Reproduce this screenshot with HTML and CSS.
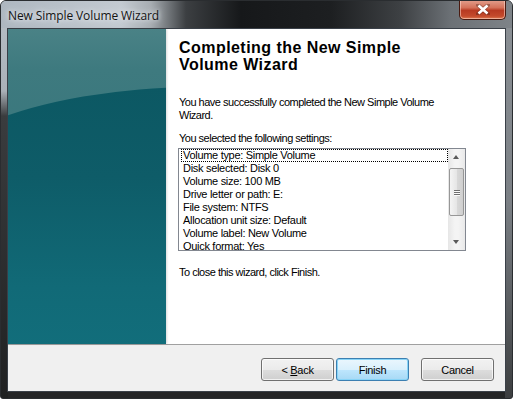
FILE: index.html
```
<!DOCTYPE html>
<html lang="en">
<head>
    <meta charset="UTF-8">
    <title>New Simple Volume Wizard</title>
    <link rel="stylesheet" href="styles.css">
</head>
<body>

<div class="window">
    <!-- Titelleiste -->
    <div class="titlebar">
        <span class="title">New Simple Volume Wizard</span>
        <button class="close" title="Close">
            <svg width="14" height="11" viewBox="0 0 14 11">
                <path d="M2 1 L12 10 M12 1 L2 10" stroke="#3a1a12" stroke-width="4" stroke-linecap="square" opacity="0.35"/>
                <path d="M2.5 1.5 L11.5 9.5 M11.5 1.5 L2.5 9.5" stroke="#fff" stroke-width="2.6"/>
            </svg>
        </button>
    </div>

    <div class="client">
        <div class="main">
            <div class="side"></div>
            <div class="content">
                <h1>Completing the New Simple Volume Wizard</h1>
                <p class="intro">You have successfully completed the New Simple Volume<br>Wizard.</p>
                <p class="label">You selected the following settings:</p>

                <div class="listbox">
                    <div class="items">
                        <div class="item focused">Volume type: Simple Volume</div>
                        <div class="item">Disk selected: Disk 0</div>
                        <div class="item">Volume size: 100 MB</div>
                        <div class="item">Drive letter or path: E:</div>
                        <div class="item">File system: NTFS</div>
                        <div class="item">Allocation unit size: Default</div>
                        <div class="item">Volume label: New Volume</div>
                        <div class="item">Quick format: Yes</div>
                    </div>
                    <div class="scrollbar">
                        <div class="arrow up"></div>
                        <div class="track">
                            <div class="thumb"><span></span><span></span><span></span></div>
                        </div>
                        <div class="arrow down"></div>
                    </div>
                </div>

                <p class="outro">To close this wizard, click Finish.</p>
            </div>
        </div>

        <!-- Schaltflächen -->
        <div class="footer">
            <button class="btn">&lt; <u>B</u>ack</button>
            <button class="btn default">Finish</button>
            <button class="btn cancel">Cancel</button>
        </div>
    </div>
</div>

</body>
</html>
```

FILE: styles.css
```
body {
    margin: 0;
    background: #ffffff;
    font-family: "Liberation Sans", Arial, sans-serif;
}
.window {
    width: 513px;
    height: 399px;
    box-sizing: border-box;
    border: 1px solid #2a2d30;
    border-radius: 6px 6px 3px 3px;
    overflow: hidden;
    background:
        linear-gradient(to bottom, #b9c0c7 0, #aab1b8 90px, #3a3c3e 115px, #202122 100%) left top / 7px 100% no-repeat,
        linear-gradient(to bottom, #8c9196 0, #7b8085 200px, #3c3e40 100%) right top / 7px 100% no-repeat,
        #242526;
    display: flex;
    flex-direction: column;
}
.titlebar {
    height: 27px;
    display: flex;
    align-items: flex-start;
    justify-content: space-between;
    background:
        linear-gradient(to right, #aeb7c0 0, #c3cad1 120px, #a7adb2 150px, #3c3f42 185px, #16181a 240px, #1d1f21 330px, #3e4144 400px, #6c7176 450px, #7e8388 100%);
}
.title {
    margin: 6px 0 0 7px;
    font-family: "Open Sans", "Noto Sans", sans-serif;
    font-size: 12px;
    letter-spacing: -0.1px;
    color: #141414;
    text-shadow: 0 0 8px #e8ecf0, 0 0 4px #e8ecf0;
}
.close {
    width: 47px;
    height: 20px;
    margin: -1px 6px 0 0;
    padding: 0;
    border: 1px solid #4a1a10;
    border-top: none;
    border-radius: 0 0 5px 5px;
    background: linear-gradient(to bottom, #e3a08e 0, #d4725a 40%, #b83a22 55%, #c44a2c 85%, #de7b52 100%);
    box-shadow: inset 0 0 0 1px rgba(255, 220, 210, 0.55);
    display: flex;
    align-items: center;
    justify-content: center;
}
.client {
    margin: 0 6px 6px 6px;
    flex: 1;
    border: 1px solid #3a4048;
    background: #f0f0f0;
    display: flex;
    flex-direction: column;
}
.main {
    height: 315px;
    display: flex;
    background: #ffffff;
    border-bottom: 1px solid #a0a0a0;
}
.side {
    width: 158px;
    position: relative;
    overflow: hidden;
    background: linear-gradient(to bottom, #4a8286 0, #3e7a7f 40px, #2f7078 100%);
    box-shadow: 1px 0 2px rgba(0, 0, 0, 0.15);
}
/* dunkler Bogen im Seitenbild */
.side::after {
    content: "";
    position: absolute;
    left: -110px;
    top: 58px;
    width: 600px;
    height: 400px;
    border-radius: 300px 300px 0 0 / 125px 125px 0 0;
    background: linear-gradient(to bottom, #0c5863 0, #0e5c68 90px, #116a77 200px, #137684 100%);
}
.content {
    flex: 1;
    padding: 10px 12px 0 13px;
    font-size: 11px;
    color: #000;
}
h1 {
    margin: 0;
    font-size: 16px;
    line-height: 17px;
    font-weight: bold;
    letter-spacing: 0.45px;
    width: 270px;
}
p {
    margin: 0;
    line-height: 13px;
    letter-spacing: -0.5px;
}
.intro {
    margin-top: 23px;
    white-space: nowrap;
}
.label {
    margin-top: 10px;
}
.listbox {
    margin: 3px 0 0 -1px;
    width: 288px;
    height: 103px;
    box-sizing: border-box;
    border: 1px solid #828790;
    display: flex;
    background: #fff;
}
.items {
    flex: 1;
    overflow: hidden;
    padding: 0 0 0 2px;
}
.item {
    height: 13px;
    line-height: 13px;
    padding-left: 2px;
    letter-spacing: -0.3px;
    white-space: nowrap;
}
.item.focused {
    outline: 1px dotted #000;
    outline-offset: -1px;
}
.scrollbar {
    width: 17px;
    display: flex;
    flex-direction: column;
    background: linear-gradient(to right, #e6e6e6, #f4f4f4 40%, #f4f4f4 60%, #e9e9e9);
}
.arrow {
    height: 17px;
    position: relative;
}
.arrow::after {
    content: "";
    position: absolute;
    left: 5px;
    border-left: 3.5px solid transparent;
    border-right: 3.5px solid transparent;
}
.arrow.up::after {
    top: 6px;
    border-bottom: 4px solid #5a5a5a;
}
.arrow.down::after {
    top: 7px;
    border-top: 4px solid #5a5a5a;
}
.track {
    flex: 1;
}
.thumb {
    margin: 2px 1px 0 1px;
    height: 48px;
    box-sizing: border-box;
    border: 1px solid #979797;
    border-radius: 2px;
    background: linear-gradient(to right, #f4f4f4, #e6e6e6 50%, #d9d9d9 51%, #cfcfcf);
    display: flex;
    flex-direction: column;
    align-items: center;
    justify-content: center;
    gap: 1px;
}
.thumb span {
    width: 6px;
    height: 1px;
    background: #6f6f6f;
    box-shadow: 0 1px 0 #fafafa;
}
.outro {
    margin-top: 15px;
}
.footer {
    flex: 1;
    display: flex;
    justify-content: flex-end;
    align-items: flex-start;
    padding: 13px 11px 0 0;
    gap: 2px;
}
.btn {
    width: 73px;
    height: 23px;
    padding: 0;
    border: 1px solid #707070;
    border-radius: 3px;
    font-family: "Liberation Sans", Arial, sans-serif;
    font-size: 11px;
    letter-spacing: -0.3px;
    color: #000;
    background: linear-gradient(to bottom, #f2f2f2 0, #ebebeb 50%, #dddddd 51%, #cfcfcf 100%);
    box-shadow: inset 0 0 0 1px rgba(255, 255, 255, 0.7);
}
.btn.default {
    border-color: #3c7fb1;
    background: linear-gradient(to bottom, #eaf6fd 0, #d9f0fc 50%, #bee6fd 51%, #a7d9f5 100%);
    box-shadow: inset 0 0 0 1px #88d4f7;
}
.btn.cancel {
    margin-left: 10px;
}
```
